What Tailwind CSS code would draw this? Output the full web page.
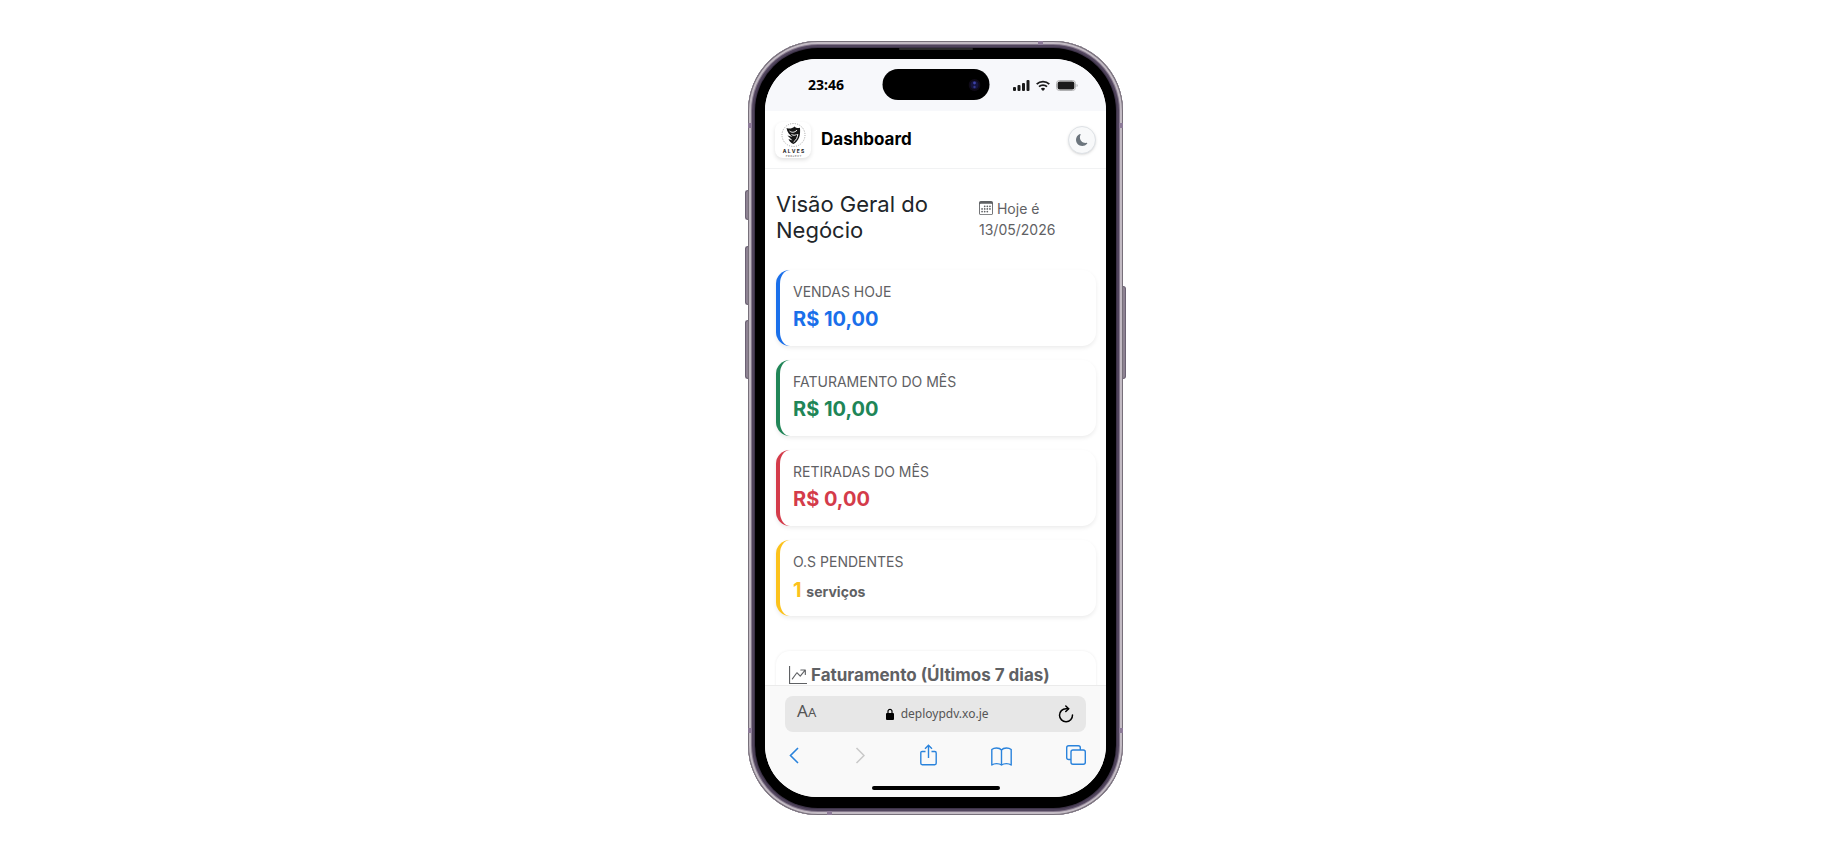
<!DOCTYPE html>
<html lang="pt-BR">
<head>
    <meta charset="UTF-8">
    <meta name="viewport" content="width=device-width, initial-scale=1.0">
    <title>Dashboard</title>
    <script src="https://cdn.jsdelivr.net/npm/@tailwindcss/browser@4"></script>
</head>
<body class="flex items-center justify-center min-h-screen pl-9 pt-[2px] bg-white font-['Inter',sans-serif]">

    <!-- Phone body -->
    <div class="relative w-[375px] rounded-[70px] p-[7px] bg-[#3d3348] shadow-[inset_0_0_0_1px_#77707a,inset_0_0_0_3px_#c3bbc4,inset_0_0_0_4px_#85788c,inset_0_0_0_6px_#50445c]">

        <!-- Side buttons -->
        <span class="absolute -left-[3px] top-[149px] w-[3px] h-[30px] rounded-l-sm bg-[#8d8292] border border-r-0 border-[#6b6173]"></span>
        <span class="absolute -left-[3px] top-[205px] w-[3px] h-[59px] rounded-l-sm bg-[#8d8292] border border-r-0 border-[#6b6173]"></span>
        <span class="absolute -left-[3px] top-[279px] w-[3px] h-[59px] rounded-l-sm bg-[#8d8292] border border-r-0 border-[#6b6173]"></span>
        <span class="absolute -right-[3px] top-[245px] w-[3px] h-[93px] rounded-r-sm bg-[#8d8292] border border-l-0 border-[#6b6173]"></span>

        <!-- Antenna bands -->
        <span class="absolute left-0 top-[82px] w-[4px] h-[5px] bg-[#8d7b98]"></span>
        <span class="absolute right-0 top-[82px] w-[4px] h-[5px] bg-[#8d7b98]"></span>
        <span class="absolute left-0 bottom-[82px] w-[4px] h-[5px] bg-[#8d7b98]"></span>
        <span class="absolute right-0 bottom-[82px] w-[4px] h-[5px] bg-[#8d7b98]"></span>
        <span class="absolute right-[80px] top-0 w-[5px] h-[4px] bg-[#8d7b98]"></span>
        <span class="absolute left-[79px] bottom-0 w-[5px] h-[4px] bg-[#8d7b98]"></span>

        <!-- Speaker -->
        <span class="absolute left-1/2 -translate-x-1/2 top-[7px] w-[74px] h-[2px] rounded-full bg-[#2a2a2a]"></span>

        <div class="rounded-[63px] bg-black px-[10px] py-[11px]">
            <div class="h-[738px] flex flex-col overflow-hidden rounded-[52px] bg-white">

                <!-- Status bar -->
                <div class="relative shrink-0 flex items-center justify-between h-[52px] pl-[43px] pr-7 bg-[#f7f8fb]">
                    <span class="text-sm font-bold text-black font-['Noto_Sans',sans-serif]">23:46</span>
                    <div class="absolute left-1/2 -translate-x-1/2 top-[10px] w-[107px] h-[31px] rounded-full bg-black flex items-center justify-end pr-[9px]">
                        <svg class="size-3" viewBox="0 0 12 12">
                            <circle cx="6" cy="6" r="6" fill="#0f0a18"/>
                            <circle cx="6" cy="6" r="4" fill="#15143f"/>
                            <circle cx="6" cy="4" r="1.4" fill="#3d41a8"/>
                            <circle cx="6" cy="8" r="1.2" fill="#34378f"/>
                        </svg>
                    </div>
                    <div class="flex items-center gap-[6px]">
                        <svg class="w-[17px] h-[11px]" viewBox="0 0 17 11" fill="#1a1a1a">
                            <rect x="0" y="7" width="3" height="4" rx="1"/>
                            <rect x="4.5" y="5" width="3" height="6" rx="1"/>
                            <rect x="9" y="3" width="3" height="8" rx="1"/>
                            <rect x="13.5" y="0" width="3" height="11" rx="1"/>
                        </svg>
                        <svg class="w-[14px] h-[11px]" viewBox="0 0 14 11" fill="none" stroke="#1a1a1a" stroke-width="1.8">
                            <path d="M.7 4.1a9 9 0 0 1 12.6 0"/>
                            <path d="M3 6.7a5.8 5.8 0 0 1 8 0"/>
                            <path d="M7 11 4.8 8.8a3.2 3.2 0 0 1 4.4 0z" fill="#1a1a1a" stroke="none"/>
                        </svg>
                        <svg class="w-[22px] h-[11px]" viewBox="0 0 22 11">
                            <rect x=".5" y=".5" width="19" height="10" rx="3" fill="#fff" stroke="#b0b1b3"/>
                            <rect x="1.6" y="1.6" width="16.8" height="7.8" rx="2" fill="#1a1a1a"/>
                            <path d="M20.6 4v3c.7-.3 1-.8 1-1.5s-.3-1.2-1-1.5z" fill="#a5a6a8"/>
                        </svg>
                    </div>
                </div>

                <!-- Page header -->
                <header class="shrink-0 flex items-center h-[58px] px-[10px] border-b border-[#f1f2f3]">
                    <svg class="size-9 rounded-lg bg-white shadow-[0_2px_4px_rgba(0,0,0,0.12)]" viewBox="0 0 36 36">
                        <circle cx="18.5" cy="13" r="11.5" fill="none" stroke="#8a8a8a" stroke-width=".8" stroke-dasharray="1 1.4"/>
                        <path d="M11.5 6c2.800 1 5.500.8 8-1.500 1.500 1.500 3.500 1.800 5.500 1.200.5 7.300-.5 12.800-6.500 16.300-2.500-1-4-2.500-5-5l4 1.500-5-5 5 1.500c-3-2-5.500-5-6-9z" fill="#161616"/>
                        <path d="M14.500 9c2.500 2 5 1.500 7.500-.8M16.500 12.500c2 1 3.500 1 5 0M18.500 20c2.800-2 4-4.500 4.300-8" fill="none" stroke="#fff" stroke-width="1"/>
                        <text x="18.5" y="31" text-anchor="middle" font-family="Inter, sans-serif" font-size="5" font-weight="700" fill="#222">A L V E S</text>
                        <text x="18.5" y="34.5" text-anchor="middle" font-family="Inter, sans-serif" font-size="2.5" fill="#444">P R O J E C T</text>
                    </svg>
                    <h1 class="ml-[10px] text-[17px] font-bold text-black">Dashboard</h1>
                    <button aria-label="Tema" class="ml-auto size-7 flex items-center justify-center rounded-full bg-[#f8f9fa] border border-[#dee2e6] shadow-sm">
                        <svg class="size-3" viewBox="0 0 16 16" fill="#6c757d">
                            <path d="M6 .278a.77.77 0 0 1 .08.858 7.2 7.2 0 0 0-.878 3.46c0 4.021 3.278 7.277 7.318 7.277q.792-.001 1.533-.16a.79.79 0 0 1 .81.316.73.73 0 0 1-.031.893A8.35 8.35 0 0 1 8.344 16C3.734 16 0 12.286 0 7.71 0 4.266 2.114 1.312 5.124.06A.75.75 0 0 1 6 .278"/>
                        </svg>
                    </button>
                </header>

                <!-- Page content -->
                <main class="flex-1 min-h-0 overflow-hidden pl-[11px] pr-[10px] pt-[22px] bg-white">
                    <div class="flex items-center justify-between mb-[27px]">
                        <h2 class="w-[180px] text-[22px] leading-[26px] text-[#212529]">Visão Geral do Negócio</h2>
                        <p class="w-[117px] pt-1 text-sm leading-[21px] text-[#5f6164]">
                            <svg class="inline size-[14px] -mt-1" viewBox="0 0 16 16" fill="currentColor">
                                <path d="M14 0H2a2 2 0 0 0-2 2v12a2 2 0 0 0 2 2h12a2 2 0 0 0 2-2V2a2 2 0 0 0-2-2M1 3.857C1 3.384 1.448 3 2 3h12c.552 0 1 .384 1 .857v10.286c0 .473-.448.857-1 .857H2c-.552 0-1-.384-1-.857z"/>
                                <path d="M6.5 7a1 1 0 1 0 0-2 1 1 0 0 0 0 2m3 0a1 1 0 1 0 0-2 1 1 0 0 0 0 2m3 0a1 1 0 1 0 0-2 1 1 0 0 0 0 2m-9 3a1 1 0 1 0 0-2 1 1 0 0 0 0 2m3 0a1 1 0 1 0 0-2 1 1 0 0 0 0 2m3 0a1 1 0 1 0 0-2 1 1 0 0 0 0 2m3 0a1 1 0 1 0 0-2 1 1 0 0 0 0 2m-9 3a1 1 0 1 0 0-2 1 1 0 0 0 0 2m3 0a1 1 0 1 0 0-2 1 1 0 0 0 0 2m3 0a1 1 0 1 0 0-2 1 1 0 0 0 0 2"/>
                            </svg>
                            Hoje é 13/05/2026
                        </p>
                    </div>

                    <div class="flex flex-col gap-[14px]">
                        <div class="h-[76px] pl-[13px] pt-[11px] rounded-[14px] border-l-4 border-[#1a6fea] bg-white shadow-[0_2px_4px_rgba(0,0,0,0.08)]">
                            <h3 class="text-sm leading-[22px] text-[#5f6164]">VENDAS HOJE</h3>
                            <p class="text-xl leading-[32px] font-bold text-[#1a6fea]">R$ 10,00</p>
                        </div>
                        <div class="h-[76px] pl-[13px] pt-[11px] rounded-[14px] border-l-4 border-[#208557] bg-white shadow-[0_2px_4px_rgba(0,0,0,0.08)]">
                            <h3 class="text-sm leading-[22px] text-[#5f6164]">FATURAMENTO DO MÊS</h3>
                            <p class="text-xl leading-[32px] font-bold text-[#208557]">R$ 10,00</p>
                        </div>
                        <div class="h-[76px] pl-[13px] pt-[11px] rounded-[14px] border-l-4 border-[#d43b4a] bg-white shadow-[0_2px_4px_rgba(0,0,0,0.08)]">
                            <h3 class="text-sm leading-[22px] text-[#5f6164]">RETIRADAS DO MÊS</h3>
                            <p class="text-xl leading-[32px] font-bold text-[#d43b4a]">R$ 0,00</p>
                        </div>
                        <div class="h-[76px] pl-[13px] pt-[11px] rounded-[14px] border-l-4 border-[#fcc21b] bg-white shadow-[0_2px_4px_rgba(0,0,0,0.08)]">
                            <h3 class="text-sm leading-[22px] text-[#5f6164]">O.S PENDENTES</h3>
                            <p class="text-xl leading-[34px] font-bold text-[#fcc21b]">1 <span class="text-sm text-[#5f6164]">serviços</span></p>
                        </div>
                    </div>

                    <!-- Chart card -->
                    <div class="mt-[35px] h-[200px] pl-[13px] pt-[14px] rounded-[14px] bg-white shadow-[0_0_3px_rgba(0,0,0,0.08)]">
                        <h3 class="flex items-center gap-1 text-[17px] leading-[20px] font-bold text-[#5f6164]">
                            <svg class="size-[18px]" viewBox="0 0 16 16" fill="currentColor">
                                <path fill-rule="evenodd" d="M0 0h1v15h15v1H0zm10 3.5a.5.5 0 0 1 .5-.5h4a.5.5 0 0 1 .5.5v4a.5.5 0 0 1-1 0V4.9l-3.613 4.417a.5.5 0 0 1-.74.037L7.06 6.767l-3.656 5.027a.5.5 0 0 1-.808-.588l4-5.5a.5.5 0 0 1 .758-.06l2.609 2.61L13.445 4H10.5a.5.5 0 0 1-.5-.5"/>
                            </svg>
                            Faturamento (Últimos 7 dias)
                        </h3>
                    </div>
                </main>

                <!-- Browser bar -->
                <div class="shrink-0 h-[112px] flex flex-col items-center px-5 pt-[10px] border-t border-[#ebebeb] bg-[#f9f9f9]">
                    <div class="w-full h-9 flex items-center justify-between px-3 rounded-lg bg-[#e7e7e7] font-['Noto_Sans',sans-serif] text-[#555]">
                        <button aria-label="Tamanho do texto" class="text-[17px] leading-none pb-2">A<span class="text-[13px]">A</span></button>
                        <a href="#" class="flex items-center gap-[7px] text-xs">
                            <svg class="w-[8px] h-[12px]" viewBox="0 0 8 12">
                                <path d="M2 6V3.3a2 2 0 0 1 4 0V6" fill="none" stroke="#000" stroke-width="1.2"/>
                                <rect y="5" width="8" height="7" rx="1" fill="#000"/>
                            </svg>
                            deploypdv.xo.je
                        </a>
                        <button aria-label="Recarregar">
                            <svg class="w-[16px] h-[18px]" viewBox="0 0 16 18" fill="none" stroke="#000" stroke-width="1.5" stroke-linecap="round" stroke-linejoin="round">
                                <path d="M14.5 10A6.5 6.5 0 1 1 8 3.7h2.5"/>
                                <path d="m7.8 1 2.9 2.7L7.8 6.5"/>
                            </svg>
                        </button>
                    </div>
                    <nav class="w-full flex items-center justify-between pl-1 mt-3 text-[#2a83dc]">
                        <button aria-label="Voltar">
                            <svg class="w-[11px] h-[22px]" viewBox="0 0 11 22" fill="none" stroke="currentColor" stroke-width="1.6"><path d="M9 4 1.500 11.500 9 19"/></svg>
                        </button>
                        <button aria-label="Avançar">
                            <svg class="w-[11px] h-[22px]" viewBox="0 0 11 22" fill="none" stroke="#c8c8c8" stroke-width="1.5"><path d="M2.500 4 10 11.500 2.500 19"/></svg>
                        </button>
                        <button aria-label="Compartilhar">
                            <svg class="w-[18px] h-[22px]" viewBox="0 0 18 22" fill="none" stroke="currentColor" stroke-width="1.4">
                                <path d="M6.500 7.500H3.200c-.9 0-1.400.5-1.400 1.400v10.400c0 .9.500 1.400 1.400 1.400h12.600c.9 0 1.400-.5 1.400-1.400V8.900c0-.9-.5-1.400-1.400-1.400h-3.300M9.500 14V1.500M6 4.800l3.500-3.500L13 4.800"/>
                            </svg>
                        </button>
                        <button aria-label="Favoritos">
                            <svg class="w-[22px] h-[22px]" viewBox="0 0 22 22" fill="none" stroke="currentColor" stroke-width="1.4" stroke-linejoin="round">
                                <path d="M11.500 6c-1.200-1.500-3-2-5-2S3 4.500 1.800 5.500V21c1.200-.9 2.900-1.400 4.700-1.400 2 0 3.800.4 5 1.400 1.200-1 3-1.400 5-1.400 1.800 0 3.500.5 4.700 1.400V5.500C20 4.500 18.500 4 16.500 4s-3.800.5-5 2zM11.500 6v15"/>
                            </svg>
                        </button>
                        <button aria-label="Abas">
                            <svg class="w-[20px] h-[22px]" viewBox="0 0 20 22" fill="none" stroke="currentColor" stroke-width="1.4">
                                <rect x="5" y="6" width="14.3" height="14.3" rx="2"/>
                                <path d="M5 15.500H2.700c-1.300 0-2-.7-2-2V3.800c0-1.300.7-2 2-2h9.600c1.300 0 2 .7 2 2V6"/>
                            </svg>
                        </button>
                    </nav>
                    <span class="w-32 h-1 mt-5 rounded-full bg-black"></span>
                </div>
            </div>
        </div>
    </div>

</body>
</html>
